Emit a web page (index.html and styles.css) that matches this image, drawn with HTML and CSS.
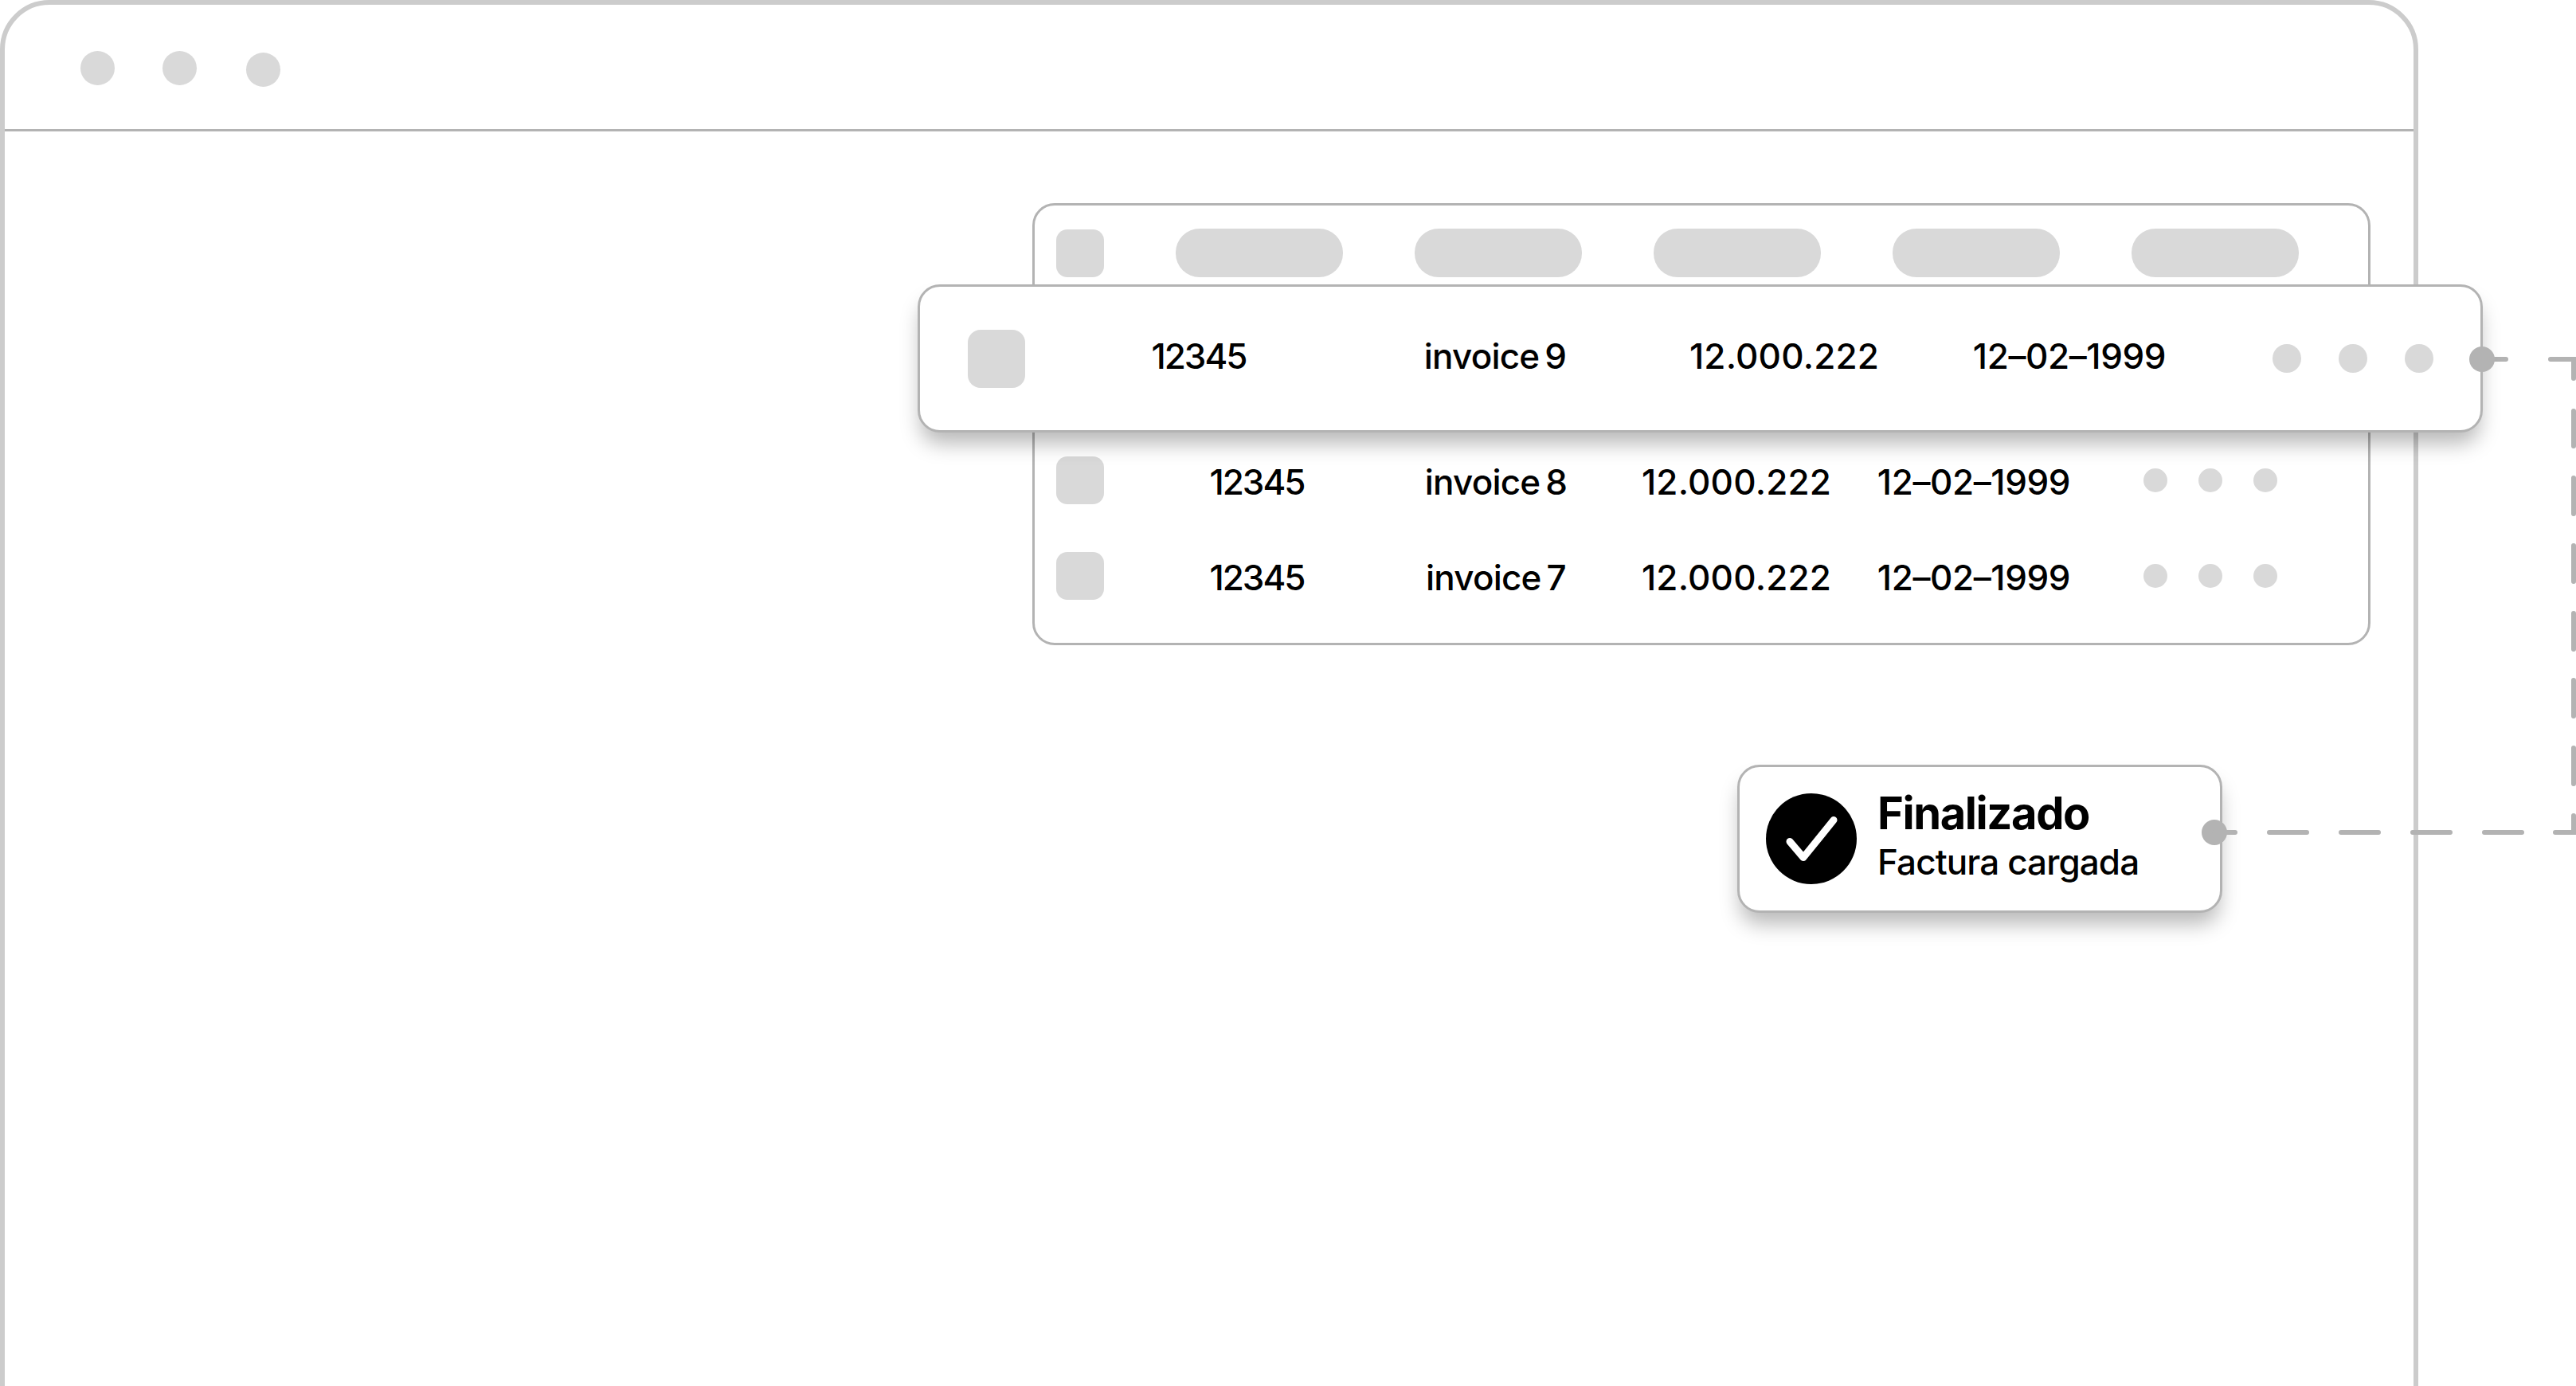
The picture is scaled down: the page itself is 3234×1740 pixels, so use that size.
FILE: index.html
```html
<!DOCTYPE html>
<html lang="es">
<head>
<meta charset="utf-8">
<title>Facturas</title>
<link rel="stylesheet" href="styles.css">
</head>
<body>
<div class="canvas">
  <section class="window">
    <header class="window-bar">
      <span class="bar-dot"></span>
      <span class="bar-dot"></span>
      <span class="bar-dot"></span>
    </header>
    <div class="window-body">
      <div class="table">
        <div class="grid-row">
          <span class="box"></span>
          <span class="pill"></span>
          <span class="pill"></span>
          <span class="pill"></span>
          <span class="pill"></span>
          <span class="pill"></span>
        </div>
        <div class="table-rows">
          <div class="grid-row">
            <span class="box"></span>
            <span class="cell">12345</span>
            <span class="cell cell-name">invoice 8</span>
            <span class="cell cell-amount">12.000.222</span>
            <span class="cell cell-date">12–02–1999</span>
            <span class="small-dots"><i></i><i></i><i></i></span>
          </div>
          <div class="grid-row">
            <span class="box"></span>
            <span class="cell">12345</span>
            <span class="cell cell-name">invoice 7</span>
            <span class="cell cell-amount">12.000.222</span>
            <span class="cell cell-date">12–02–1999</span>
            <span class="small-dots"><i></i><i></i><i></i></span>
          </div>
        </div>
      </div>
      <div class="status">
        <svg class="check" viewBox="0 0 114 114" aria-hidden="true">
          <circle cx="57" cy="57" r="57" fill="#000"/>
          <path d="M30 60.5L47 80.5L85 33.5" fill="none" stroke="#fff" stroke-width="9" stroke-linecap="round" stroke-linejoin="round"/>
        </svg>
        <div class="status-text">
          <strong class="status-title">Finalizado</strong>
          <span class="status-sub">Factura cargada</span>
        </div>
        <span class="node node-status"></span>
      </div>
    </div>
  </section>

  <svg class="wires" width="3234" height="1740" viewBox="0 0 3234 1740" aria-hidden="true">
    <path class="wire" d="M3116 451H3146M3202 451H3231V475M3231 516V560M3231 600V645M3231 685V730M3231 770V815M3231 854V899M3231 939V984M3231 1024V1045H3208M3166 1045H3119M3076 1045H3029M2986 1045H2939M2896 1045H2849M2806 1045H2780"/>
  </svg>

  <div class="float-row">
    <span class="box box-lg"></span>
    <span class="cell">12345</span>
    <span class="cell cell-name">invoice 9</span>
    <span class="cell cell-amount">12.000.222</span>
    <span class="cell cell-date">12–02–1999</span>
    <span class="big-dots"><i></i><i></i><i></i></span>
    <span class="node node-row"></span>
  </div>
</div>
</body>
</html>
```

FILE: styles.css
```css
* { box-sizing: border-box; }

html, body {
  margin: 0;
  background: #fff;
}

.canvas {
  position: relative;
  width: 3234px;
  height: 1740px;
  overflow: hidden;
  font-family: Inter, "Liberation Sans", sans-serif;
  color: #000;
}

.window {
  width: 3036px;
  height: 1800px;
  border: 6px solid #ccc;
  border-radius: 62px 62px 0 0;
}

.window-bar {
  height: 159px;
  border-bottom: 3px solid #b3b3b3;
  display: flex;
  gap: 60px;
  align-items: flex-start;
  padding: 58px 0 0 95px;
}

.bar-dot {
  width: 43px;
  height: 43px;
  border-radius: 50%;
  background: #d9d9d9;
}

.bar-dot:last-child {
  margin: 2px 0 0 2px;
}

.window-body {
  padding: 90px 0 0 1290px;
}

.table {
  width: 1680px;
  height: 555px;
  padding: 29px 0 0 27px;
  border: 3px solid #b3b3b3;
  border-radius: 28px;
}

.grid-row {
  display: grid;
  grid-template-columns: 60px repeat(5, 210px);
  column-gap: 90px;
  align-items: center;
}

.table-rows {
  margin-top: 225px;
  display: flex;
  flex-direction: column;
  gap: 60px;
}

.box {
  width: 60px;
  height: 60px;
  border-radius: 14px;
  background: #d9d9d9;
}

.box-lg {
  width: 72px;
  height: 73px;
  border-radius: 16px;
}

.pill {
  height: 61px;
  border-radius: 30px;
  background: #d9d9d9;
}

.cell {
  font-size: 44px;
  font-weight: 500;
  line-height: 60px;
  letter-spacing: -2px;
  text-align: center;
  white-space: nowrap;
}

.cell-name {
  letter-spacing: -.8px;
  word-spacing: -4px;
}

.cell-amount {
  letter-spacing: .2px;
}

.cell-date {
  letter-spacing: -.4px;
}

.grid-row .cell {
  justify-self: center;
  position: relative;
  left: -3px;
  top: 2px;
}

.grid-row .cell-amount {
  left: -1px;
}

.small-dots {
  display: flex;
  gap: 39px;
  padding-left: 15px;
}

.small-dots i {
  width: 30px;
  height: 30px;
  border-radius: 50%;
  background: #d9d9d9;
}

.float-row {
  position: absolute;
  left: 1152px;
  top: 357px;
  width: 1965px;
  height: 186px;
  padding-left: 60px;
  display: grid;
  grid-template-columns: 72px 436px 308px 414px 306px 1fr;
  align-items: center;
  background: #fff;
  border: 3px solid #b3b3b3;
  border-radius: 28px;
  box-shadow: 0 18px 26px -4px rgba(0, 0, 0, .28);
}

.float-row .cell {
  position: relative;
  top: -3px;
}

.float-row .cell-amount {
  left: 2px;
}

.big-dots {
  display: flex;
  gap: 47px;
  padding-left: 102px;
}

.big-dots i {
  width: 36px;
  height: 36px;
  border-radius: 50%;
  background: #d9d9d9;
}

.status {
  position: relative;
  width: 609px;
  height: 186px;
  margin: 150px 0 0 885px;
  padding-left: 33px;
  display: flex;
  align-items: center;
  gap: 26px;
  background: #fff;
  border: 3px solid #b3b3b3;
  border-radius: 28px;
  box-shadow: 0 18px 26px -4px rgba(0, 0, 0, .28);
}

.check {
  width: 114px;
  height: 114px;
  flex: none;
}

.status-text {
  display: flex;
  flex-direction: column;
  gap: 6px;
  padding-bottom: 8px;
}

.status-title {
  font-size: 56px;
  font-weight: 700;
  line-height: 60px;
  letter-spacing: -1.4px;
}

.status-sub {
  font-size: 44px;
  font-weight: 500;
  line-height: 50px;
  letter-spacing: -.9px;
}

.node {
  position: absolute;
  width: 32px;
  height: 32px;
  border-radius: 50%;
  background: #b3b3b3;
}

.node-row {
  right: -18px;
  top: 75px;
}

.node-status {
  right: -9px;
  top: 66px;
}

.wires {
  position: absolute;
  left: 0;
  top: 0;
  pointer-events: none;
}

.wire {
  fill: none;
  stroke: #b3b3b3;
  stroke-width: 6;
  stroke-linecap: round;
  stroke-linejoin: miter;
}
```
